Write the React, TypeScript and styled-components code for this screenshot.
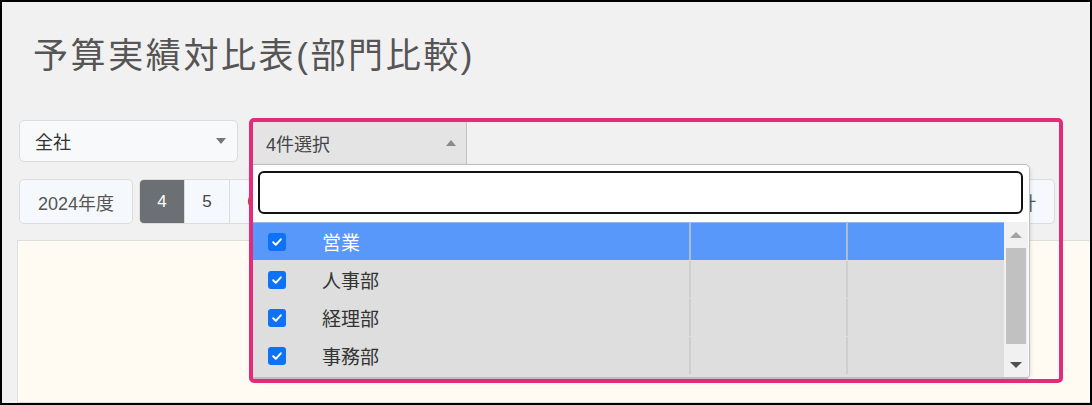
import styled, { createGlobalStyle } from "styled-components";

const GlobalStyle = createGlobalStyle`
  html, body {
    margin: 0;
    padding: 0;
  }
  body {
    font-family: "Liberation Sans", "Noto Sans CJK JP", sans-serif;
  }
`;

const departments = [
  { name: "営業", active: true },
  { name: "人事部", active: false },
  { name: "経理部", active: false },
  { name: "事務部", active: false },
];

const months = [4, 5, 6, 7, 8, 9, 10, 11, 12, 1, 2, 3];

const App = () => {
  return (
    <>
      <GlobalStyle />
      <Frame>
        <Title>予算実績対比表(部門比較)</Title>
        <Controls>
          <FilterRow>
            <Select>
              全社
              <Caret />
            </Select>
            <MultiWrap>
              <MultiSelect>
                4件選択
                <Caret $up />
              </MultiSelect>
              <Dropdown>
                <SearchBox type="text" />
                <ListArea>
                  <Rows>
                    {departments.map((d) => (
                      <Row key={d.name} $active={d.active}>
                        <Cell>
                          <Check>
                            <svg width="12" height="12" viewBox="0 0 12 12">
                              <path
                                d="M2.2 6.3 L4.8 8.8 L9.8 3.3"
                                fill="none"
                                stroke="#fff"
                                strokeWidth="2"
                                strokeLinecap="round"
                                strokeLinejoin="round"
                              />
                            </svg>
                          </Check>
                          <Label>{d.name}</Label>
                        </Cell>
                        <Cell />
                        <Cell />
                      </Row>
                    ))}
                  </Rows>
                  <Scrollbar>
                    <ScrollArrow />
                    <Thumb />
                    <ScrollArrow $down />
                  </Scrollbar>
                </ListArea>
              </Dropdown>
              <Highlight />
            </MultiWrap>
          </FilterRow>
          <ButtonRow>
            <Left>
              <YearButton>2024年度</YearButton>
              <MonthGroup>
                {months.map((m) => (
                  <MonthButton key={m} $active={m === 4}>
                    {m}
                  </MonthButton>
                ))}
              </MonthGroup>
            </Left>
            <YearButton>合計</YearButton>
          </ButtonRow>
        </Controls>
        <Panel />
      </Frame>
    </>
  );
};
export default App;

const Frame = styled.div`
  position: relative;
  width: 1092px;
  height: 405px;
  box-sizing: border-box;
  border: 2px solid #000;
  background: #f1f1f1;
  overflow: hidden;
  display: flex;
  flex-direction: column;
`;

const Title = styled.h1`
  margin: 0;
  padding: 29px 0 0 31px;
  font-size: 35px;
  line-height: 50px;
  font-weight: 400;
  color: #555;
  letter-spacing: 2.6px;
`;

const Controls = styled.div`
  padding: 0 35px 0 17px;
  margin-top: 39px;
`;

const FilterRow = styled.div`
  display: flex;
  align-items: flex-start;
  gap: 13px;
`;

const Caret = styled.span<{ $up?: boolean }>`
  width: 0;
  height: 0;
  border-left: 5px solid transparent;
  border-right: 5px solid transparent;
  ${(p) =>
    p.$up ? "border-bottom: 6px solid #8a8a8a;" : "border-top: 6px solid #777;"}
`;

const Select = styled.div`
  width: 219px;
  height: 42px;
  box-sizing: border-box;
  padding: 0 11px 0 15px;
  display: flex;
  align-items: center;
  justify-content: space-between;
  background: #f8f9fb;
  border: 1px solid #dcdcdc;
  border-radius: 5px;
  font-size: 18px;
  color: #333;
`;

const MultiWrap = styled.div`
  position: relative;
  z-index: 2;
`;

const MultiSelect = styled.div`
  width: 216px;
  height: 44px;
  box-sizing: border-box;
  padding: 0 10px 0 14px;
  display: flex;
  align-items: center;
  justify-content: space-between;
  background: #e4e4e4;
  border: 1px solid #c4c4c4;
  border-bottom: none;
  border-radius: 4px 4px 0 0;
  font-size: 18px;
  color: #444;
`;

const Dropdown = styled.div`
  position: absolute;
  top: 44px;
  left: 0;
  width: 779px;
  height: 215px;
  box-sizing: border-box;
  background: #fff;
  border: 1px solid #bdbdbd;
  border-radius: 0 5px 5px 5px;
  box-shadow: 0 2px 4px rgba(0, 0, 0, 0.15);
  display: flex;
  flex-direction: column;
  padding: 0 1px;
`;

const SearchBox = styled.input`
  margin: 6px 5px 8px;
  height: 43px;
  box-sizing: border-box;
  border: 2px solid #111;
  border-radius: 6px;
  background: #fff;
  outline: none;
  font-size: 16px;
`;

const ListArea = styled.div`
  flex: 1;
  display: flex;
  background: #dedede;
  border-bottom: 2px solid #bdbdbd;
  margin-bottom: -1px;
`;

const Rows = styled.div`
  flex: 1;
  display: flex;
  flex-direction: column;
`;

const Row = styled.div<{ $active: boolean }>`
  display: grid;
  grid-template-columns: 438px 157px 1fr;
  height: 38px;
  box-sizing: border-box;
  background: ${(p) => (p.$active ? "#5898fb" : "#dedede")};
  border-top: 1px solid ${(p) => (p.$active ? "#8fb8f7" : "#dedede")};
  color: ${(p) => (p.$active ? "#fff" : "#333")};
`;

const Cell = styled.div`
  display: flex;
  align-items: center;
  border-right: 2px solid rgba(200, 200, 200, 0.75);
  &:last-child {
    border-right: none;
  }
`;

const Check = styled.span`
  width: 18px;
  height: 18px;
  margin-left: 15px;
  border-radius: 3px;
  background: #0d72f5;
  display: flex;
  align-items: center;
  justify-content: center;
`;

const Label = styled.span`
  margin-left: 36px;
  font-size: 19px;
  font-family: "Noto Sans CJK JP", sans-serif;
`;

const Scrollbar = styled.div`
  width: 24px;
  background: #f1f1f1;
  display: flex;
  flex-direction: column;
  align-items: center;
  padding: 10px 0 9px;
  box-sizing: border-box;
  justify-content: space-between;
`;

const ScrollArrow = styled.span<{ $down?: boolean }>`
  width: 0;
  height: 0;
  border-left: 6px solid transparent;
  border-right: 6px solid transparent;
  ${(p) =>
    p.$down
      ? "border-top: 6px solid #505050;"
      : "border-bottom: 6px solid #a3a3a3;"}
`;

const Thumb = styled.span`
  width: 20px;
  height: 96px;
  background: #c1c1c1;
  margin-bottom: 8px;
`;

const Highlight = styled.div`
  position: absolute;
  top: -2px;
  left: -2px;
  width: 814px;
  height: 265px;
  box-sizing: border-box;
  border: 4px solid #e22b79;
  border-radius: 5px;
  pointer-events: none;
`;

const ButtonRow = styled.div`
  display: flex;
  justify-content: space-between;
  align-items: center;
  margin-top: 15px;
  position: relative;
  z-index: 1;
`;

const Left = styled.div`
  display: flex;
  gap: 6px;
`;

const YearButton = styled.div`
  height: 45px;
  box-sizing: border-box;
  padding: 0 18px;
  display: flex;
  align-items: center;
  background: #f5f8fc;
  border: 1px solid #dcdcdc;
  border-radius: 5px;
  font-size: 18px;
  color: #555;
`;

const MonthGroup = styled.div`
  display: flex;
  border: 1px solid #dcdcdc;
  border-radius: 5px;
  overflow: hidden;
`;

const MonthButton = styled.div<{ $active: boolean }>`
  width: 44px;
  height: 43px;
  display: flex;
  align-items: center;
  justify-content: center;
  font-size: 17px;
  background: ${(p) => (p.$active ? "#6c7074" : "#f5f8fc")};
  color: ${(p) => (p.$active ? "#fff" : "#444")};
  border-left: 1px solid #dcdcdc;
  &:first-child {
    border-left: none;
  }
`;

const Panel = styled.div`
  flex: 1;
  margin: 16px -20px 0 15px;
  background: #fffaf2;
  border: 1px solid #dedede;
`;
